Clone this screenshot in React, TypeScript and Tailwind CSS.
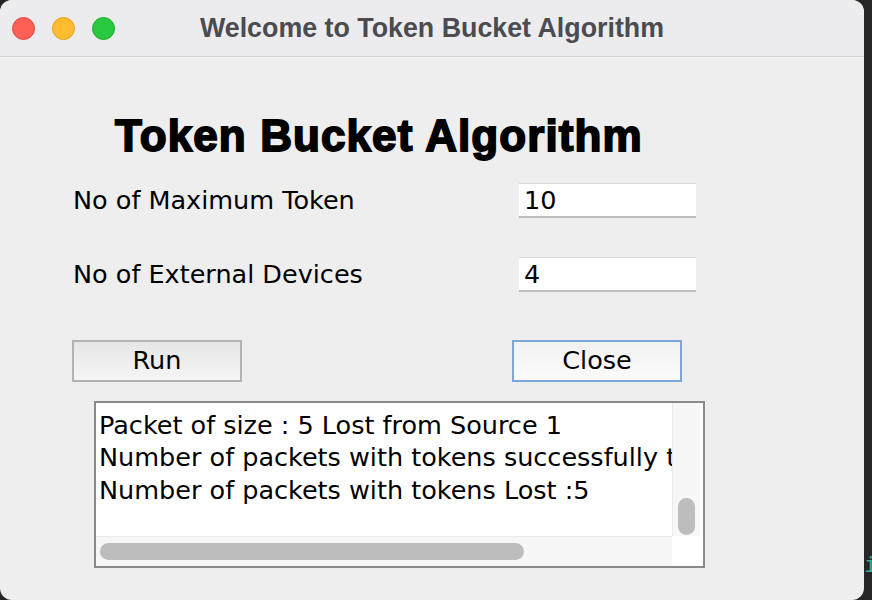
export default function App() {
  const ui = "font-['DejaVu_Sans',sans-serif]";
  return (
    <div className="w-[872px] h-[600px] bg-[#262626] flex overflow-hidden">
      <div className="w-[864px] h-[600px] shrink-0 rounded-[12px] overflow-hidden bg-[#eeeeee] flex flex-col">
        {/* title bar */}
        <div className="h-[57px] shrink-0 bg-[#ececef] border-b border-[#d4d4d6] flex items-center relative">
          <div className="flex items-center gap-[17px] pl-[12px]">
            <span className="w-[23px] h-[23px] rounded-full bg-[#fe5f57] border border-[#e2463f]" />
            <span className="w-[23px] h-[23px] rounded-full bg-[#febc2e] border border-[#e1a116]" />
            <span className="w-[23px] h-[23px] rounded-full bg-[#28c840] border border-[#14ae2c]" />
          </div>
          <div className="absolute inset-0 flex items-center justify-center pointer-events-none">
            <span className="font-['Liberation_Sans',sans-serif] font-bold text-[26.8px] text-[#4b4b50]">
              Welcome to Token Bucket Algorithm
            </span>
          </div>
        </div>

        {/* body */}
        <div className={`flex-1 flex flex-col ${ui} text-black`}>
          <h1 className="mt-[58px] ml-[115px] font-['Liberation_Sans',sans-serif] font-bold text-[44px] leading-[42px] tracking-[1.1px] [-webkit-text-stroke:1.8px_black]">
            Token Bucket Algorithm
          </h1>

          <div className="mt-[24px] flex items-center">
            <span className="ml-[73px] w-[446px] text-[25.5px]">No of Maximum Token</span>
            <div className="w-[177px] h-[35px] bg-white border-t border-[#d8d8d8] border-b-2 border-b-[#bdbdbd] flex items-center pl-[5px] text-[25.5px]">
              10
            </div>
          </div>

          <div className="mt-[36px] flex items-center">
            <span className="ml-[73px] w-[446px] text-[25.5px]">No of External Devices</span>
            <div className="w-[177px] h-[35px] bg-white border-t border-[#d8d8d8] border-b-2 border-b-[#bdbdbd] flex items-center pl-[5px] text-[25.5px]">
              4
            </div>
          </div>

          <div className="mt-[46px] flex items-center">
            <button className="ml-[72px] w-[170px] h-[42px] border-2 border-[#b2b2b2] bg-gradient-to-b from-[#e6e6e6] to-[#f5f5f5] text-[25.5px] flex items-center justify-center">
              Run
            </button>
            <button className="ml-[270px] w-[170px] h-[42px] border-2 border-[#7ea6d8] bg-gradient-to-b from-[#f2f2f2] to-[#fbfbfb] text-[25.5px] flex items-center justify-center">
              Close
            </button>
          </div>

          <div className="mt-[19px] ml-[94px] w-[611px] h-[167px] border-2 border-[#8a8a8a] bg-white flex flex-col">
            <div className="flex flex-1 min-h-0">
              <div className="flex-1 overflow-hidden pl-[3px] pt-[6px] text-[25.5px] leading-[32.5px] whitespace-nowrap">
                <div>Packet of size : 5 Lost from Source 1</div>
                <div>Number of packets with tokens successfully transmitted :5</div>
                <div>Number of packets with tokens Lost :5</div>
              </div>
              <div className="w-[28px] mr-[3px] bg-[#f7f7f7] border-l border-[#ebebeb] flex flex-col justify-end items-center pb-[1px]">
                <div className="w-[17px] h-[37px] rounded-full bg-[#bdbdbd]" />
              </div>
            </div>
            <div className="h-[30px] flex">
              <div className="flex-1 bg-[#f7f7f7] border-t border-[#ebebeb] flex items-center pl-[4px]">
                <div className="w-[424px] h-[17px] rounded-full bg-[#bdbdbd]" />
              </div>
              <div className="w-[31px] bg-white" />
            </div>
          </div>
        </div>
      </div>
      <div className="flex-1 flex flex-col justify-end pb-[24px] overflow-hidden">
        <span className="font-['DejaVu_Sans_Mono',monospace] text-[22px] leading-[22px] text-[#2fb39a]">i</span>
      </div>
    </div>
  );
}
